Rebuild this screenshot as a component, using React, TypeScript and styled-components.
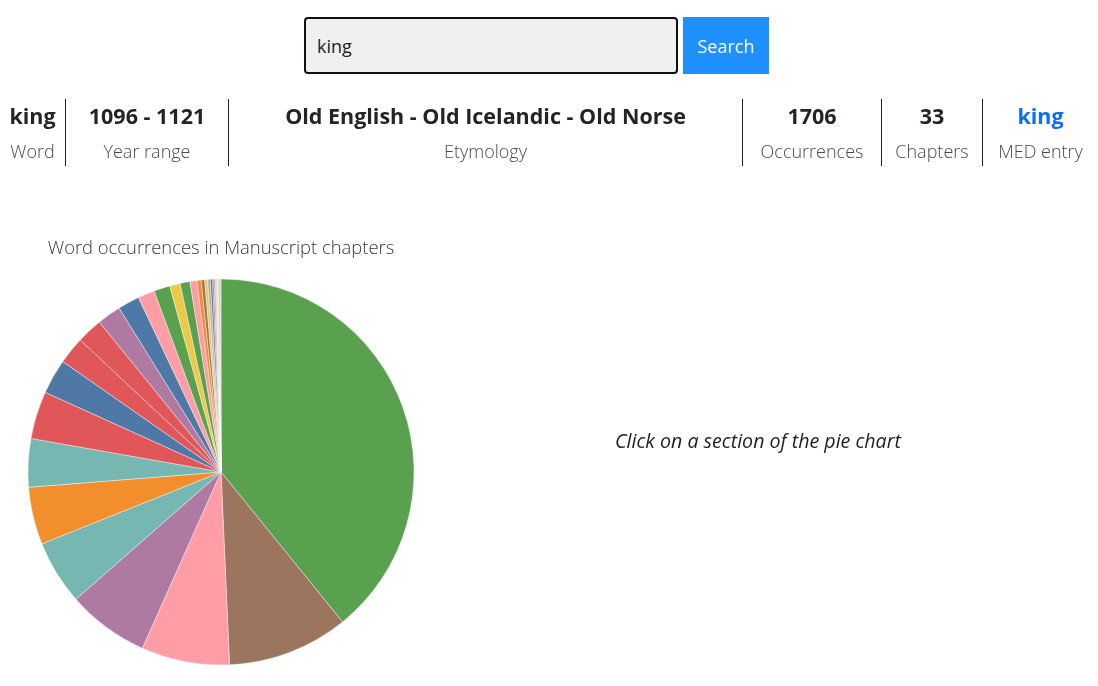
import React from "react";
import styled, { createGlobalStyle } from "styled-components";

const GlobalStyle = createGlobalStyle`
  html, body {
    margin: 0;
    padding: 0;
    background: #ffffff;
    font-family: "Open Sans", "Noto Sans", "Liberation Sans", sans-serif;
    color: #212529;
  }
`;

const Page = styled.div`
  padding-top: 17px;
  width: 1098px;
  overflow: hidden;
`;

const SearchBar = styled.form`
  display: flex;
  justify-content: center;
  gap: 5px;
  padding-right: 25px;
`;

const SearchInput = styled.input`
  box-sizing: border-box;
  width: 374px;
  height: 57px;
  border: 2px solid #111111;
  border-radius: 4px;
  background: #f0f0f0;
  font-family: inherit;
  font-size: 18px;
  color: #222;
  padding: 0 11px;
  outline: none;
  caret-color: #000;
`;

const SearchButton = styled.button`
  width: 86px;
  height: 57px;
  border: none;
  background: #1e90ff;
  color: #ffffff;
  font-family: inherit;
  font-size: 18px;
  cursor: pointer;
`;

const StatsRow = styled.div`
  display: grid;
  grid-template-columns: 65px 163px 514px 139px 101px 116px;
  margin-top: 25px;
`;

const StatCell = styled.div<{ $first?: boolean }>`
  text-align: center;
  border-left: ${(p) => (p.$first ? "none" : "1px solid #222")};
  white-space: nowrap;
`;

const StatValue = styled.div<{ $link?: boolean }>`
  font-weight: 700;
  font-size: 21.5px;
  line-height: 34px;
  color: ${(p) => (p.$link ? "#0d6efd" : "#212529")};
`;

const StatLabel = styled.div`
  font-weight: 300;
  font-size: 18px;
  line-height: 30px;
  padding-top: 3px;
  color: #4a4a4a;
`;

const ChartArea = styled.div`
  display: flex;
  align-items: center;
  margin-top: 69px;
`;

const ChartColumn = styled.div`
  width: 442px;
  display: flex;
  flex-direction: column;
  align-items: center;
`;

const ChartTitle = styled.div`
  font-size: 18.4px;
  font-weight: 300;
  line-height: 24px;
  color: #3a3a3a;
  margin-bottom: 18px;
`;

const PieSvg = styled.svg`
  display: block;
`;

const Prompt = styled.div`
  flex: 1;
  text-align: center;
  font-style: italic;
  font-size: 19.6px;
  color: #222;
  padding-right: 24px;
  padding-bottom: 24px;
`;

const C = {
  blue: "#4e79a7",
  orange: "#f28e2c",
  red: "#e15759",
  teal: "#76b7b2",
  green: "#59a14f",
  yellow: "#edc949",
  purple: "#af7aa1",
  pink: "#ff9da7",
  brown: "#9c755f",
  gray: "#bab0ab",
};

const slices: [number, string][] = [
  [668, C.green],
  [173, C.brown],
  [126, C.pink],
  [117, C.purple],
  [92, C.teal],
  [82, C.orange],
  [69, C.teal],
  [68, C.red],
  [50, C.blue],
  [39, C.red],
  [37, C.red],
  [34, C.purple],
  [31, C.blue],
  [24, C.pink],
  [23, C.green],
  [15, C.yellow],
  [14, C.green],
  [10, C.pink],
  [6, C.orange],
  [5, C.brown],
  [4, C.yellow],
  [4, C.gray],
  [3, C.blue],
  [2, C.red],
  [2, C.teal],
  [1, C.purple],
  [1, C.gray],
  [1, C.orange],
  [1, C.pink],
  [1, C.yellow],
  [1, C.blue],
  [1, C.brown],
  [1, C.gray],
];

const Pie: React.FC = () => {
  const cx = 221;
  const cy = 195;
  const r = 193;
  const total = slices.reduce((s, [v]) => s + v, 0);
  let acc = 0;
  const paths = slices.map(([v, color], i) => {
    const a0 = (acc / total) * Math.PI * 2;
    acc += v;
    const a1 = (acc / total) * Math.PI * 2;
    const x0 = cx + r * Math.sin(a0);
    const y0 = cy - r * Math.cos(a0);
    const x1 = cx + r * Math.sin(a1);
    const y1 = cy - r * Math.cos(a1);
    const large = a1 - a0 > Math.PI ? 1 : 0;
    const d = `M${x0.toFixed(2)},${y0.toFixed(2)}A${r},${r} 0 ${large} 1 ${x1.toFixed(
      2
    )},${y1.toFixed(2)}L${cx},${cy}Z`;
    return <path key={i} d={d} fill={color} stroke="#ffffff" strokeWidth={0.4} />;
  });
  return (
    <PieSvg width={442} height={392} viewBox="0 0 442 392">
      {paths}
    </PieSvg>
  );
};

export default function App() {
  return (
    <Page>
      <GlobalStyle />
      <SearchBar onSubmit={(e) => e.preventDefault()}>
        <SearchInput defaultValue="king" autoFocus />
        <SearchButton type="submit">Search</SearchButton>
      </SearchBar>
      <StatsRow>
        <StatCell $first>
          <StatValue>king</StatValue>
          <StatLabel>Word</StatLabel>
        </StatCell>
        <StatCell>
          <StatValue>1096 - 1121</StatValue>
          <StatLabel>Year range</StatLabel>
        </StatCell>
        <StatCell>
          <StatValue>Old English - Old Icelandic - Old Norse</StatValue>
          <StatLabel>Etymology</StatLabel>
        </StatCell>
        <StatCell>
          <StatValue>1706</StatValue>
          <StatLabel>Occurrences</StatLabel>
        </StatCell>
        <StatCell>
          <StatValue>33</StatValue>
          <StatLabel>Chapters</StatLabel>
        </StatCell>
        <StatCell>
          <StatValue $link>king</StatValue>
          <StatLabel>MED entry</StatLabel>
        </StatCell>
      </StatsRow>
      <ChartArea>
        <ChartColumn>
          <ChartTitle>Word occurrences in Manuscript chapters</ChartTitle>
          <Pie />
        </ChartColumn>
        <Prompt>Click on a section of the pie chart</Prompt>
      </ChartArea>
    </Page>
  );
}
